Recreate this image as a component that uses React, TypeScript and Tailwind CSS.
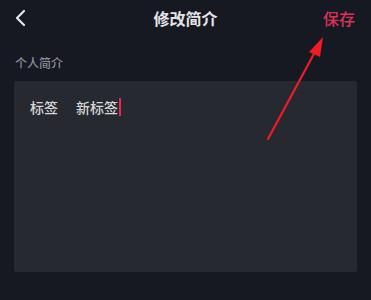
import React from "react";

export default function App() {
  return (
    <div
      className="relative w-[371px] h-[300px] bg-[#161822] overflow-hidden"
      style={{ fontFamily: '"Noto Sans CJK SC", "Noto Sans", sans-serif' }}
    >
      <div className="relative h-[36px] flex items-center justify-between px-[14px]">
        <svg width="14" height="18" viewBox="0 0 14 18">
          <path d="M10 2 L3 9 L10 16" fill="none" stroke="#e6e6ea" strokeWidth="2.2" strokeLinecap="round" strokeLinejoin="round" />
        </svg>
        <div className="absolute left-0 right-0 text-center text-[16px] font-bold text-[#e4e4e8] leading-none pointer-events-none">
          修改简介
        </div>
        <div className="text-[16px] font-medium text-[#dc3159] leading-none mr-[2px]">保存</div>
      </div>
      <div className="px-[15px] pt-[21px] text-[12px] font-medium text-[#8c8e96] leading-none">个人简介</div>
      <div className="mx-[14px] mt-[12px] h-[191px] bg-[#262930] rounded-[2px] px-[16px] pt-[17px]">
        <div className="flex items-center text-[14px] font-medium text-[#d6d6da] leading-none">
          <span>标签</span>
          <span className="ml-[18px]">新标签</span>
          <span className="ml-[1px] w-[2px] h-[18px] bg-[#e8285a]" />
        </div>
      </div>
      <svg className="absolute left-0 top-0" width="371" height="300" viewBox="0 0 371 300">
        <line x1="268" y1="139" x2="316" y2="50" stroke="#ee1c24" strokeWidth="2.2" strokeLinecap="round" />
        <polygon points="323,37 309,52 320,57" fill="#ee1c24" />
      </svg>
    </div>
  );
}
